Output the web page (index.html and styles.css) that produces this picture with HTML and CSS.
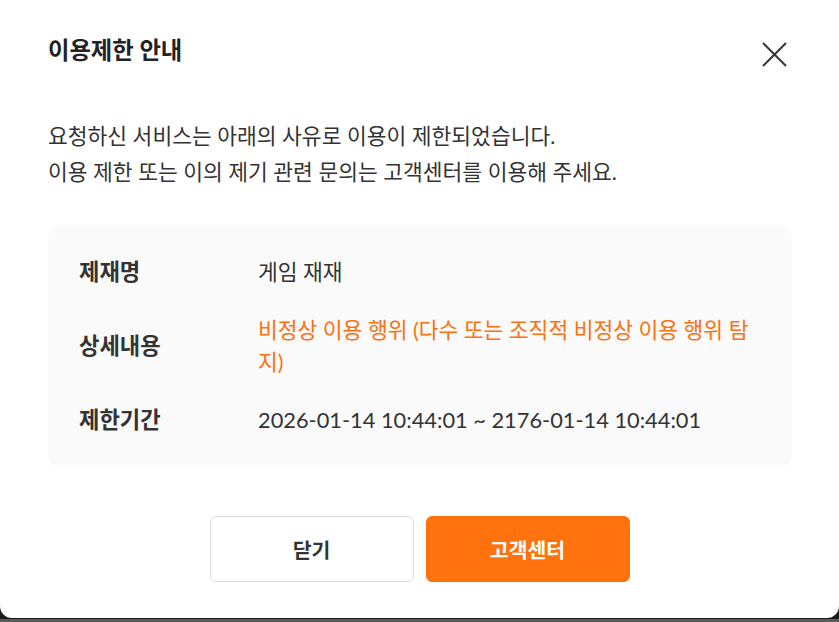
FILE: index.html
```html
<!DOCTYPE html>
<html lang="ko">
<head>
<meta charset="utf-8">
<title>이용제한 안내</title>
<link rel="stylesheet" href="styles.css">
</head>
<body>
<div class="modal">
  <div class="modal-header">
    <h1 class="modal-title">이용제한 안내</h1>
    <button class="close-btn" aria-label="닫기">
      <svg width="25" height="25" viewBox="0 0 25 25" fill="none" stroke="#333" stroke-width="2" stroke-linecap="butt">
        <line x1="1" y1="1" x2="24" y2="24"/>
        <line x1="24" y1="1" x2="1" y2="24"/>
      </svg>
    </button>
  </div>
  <p class="modal-desc">요청하신 서비스는 아래의 사유로 이용이 제한되었습니다.<br>이용 제한 또는 이의 제기 관련 문의는 고객센터를 이용해 주세요.</p>
  <div class="info-box">
    <div class="info-row">
      <div class="info-label">제재명</div>
      <div class="info-value">게임 재재</div>
    </div>
    <div class="info-row">
      <div class="info-label">상세내용</div>
      <div class="info-value accent">비정상 이용 행위 (다수 또는 조직적 비정상 이용 행위 탐지)</div>
    </div>
    <div class="info-row">
      <div class="info-label">제한기간</div>
      <div class="info-value date">2026-01-14 10:44:01 ~ 2176-01-14 10:44:01</div>
    </div>
  </div>
  <div class="actions">
    <button class="btn btn-secondary">닫기</button>
    <button class="btn btn-primary">고객센터</button>
  </div>
</div>
</body>
</html>
```

FILE: styles.css
```css
* { box-sizing: border-box; }
html, body { margin: 0; padding: 0; }
body {
  width: 839px;
  height: 622px;
  overflow: hidden;
  background: linear-gradient(to bottom, #1b1b1b 619px, #5a5a5a 619px);
  font-family: Lato, "Noto Sans CJK KR", "Noto Sans", sans-serif;
  color: #333;
}
.modal {
  width: 839px;
  height: 618px;
  background: #fff;
  border-radius: 0 0 12px 12px;
  padding: 34px 47px 36px 48px;
  display: flex;
  flex-direction: column;
}
.modal-header {
  display: flex;
  justify-content: space-between;
  align-items: flex-start;
}
.modal-title {
  margin: 0;
  font-size: 23.3px;
  line-height: 32px;
  font-weight: 700;
  color: #222;
}
.close-btn {
  margin-top: 2px;
  width: 36px;
  height: 36px;
  padding: 0;
  border: 0;
  background: none;
  display: flex;
  align-items: center;
  justify-content: center;
  cursor: pointer;
}
.modal-desc {
  margin: 46px 0 0;
  font-size: 21.5px;
  line-height: 36px;
  color: #333;
}
.info-box {
  margin-top: 35px;
  height: 242px;
  background: #fafafa;
  border-radius: 12px;
  padding: 31px 30px 31px 31px;
  display: flex;
  flex-direction: column;
  gap: 26px;
}
.info-row {
  display: grid;
  grid-template-columns: 179px 1fr;
  align-items: center;
}
.info-label {
  font-size: 22.2px;
  line-height: 32px;
  font-weight: 700;
  color: #333;
}
.info-value {
  font-size: 21.5px;
  line-height: 32px;
  color: #333;
}
.info-value.date { font-size: 21.8px; }
.info-value.accent { color: #ff6f0f; }
.actions {
  margin-top: 49px;
  display: flex;
  justify-content: center;
  gap: 12px;
  padding-right: 1px;
}
.btn {
  width: 204px;
  height: 66px;
  border-radius: 6px;
  font-family: Lato, "Noto Sans CJK KR", sans-serif;
  font-size: 20.5px;
  font-weight: 700;
  cursor: pointer;
}
.btn-secondary {
  background: #fff;
  border: 1px solid #dcdcdc;
  color: #333;
}
.btn-primary {
  background: #ff720d;
  border: 1px solid #ff720d;
  color: #fff;
}
```
